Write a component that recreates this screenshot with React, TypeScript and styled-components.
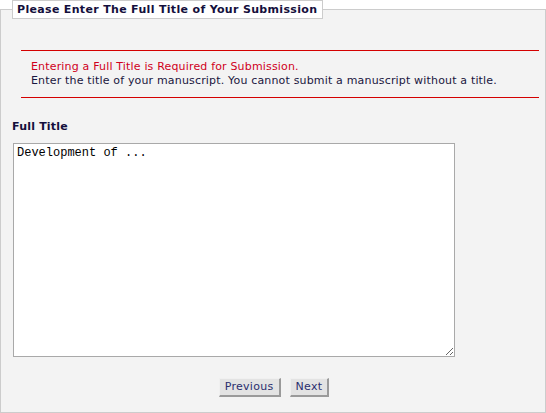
import styled, { createGlobalStyle } from 'styled-components';

const GlobalStyle = createGlobalStyle`
  html, body {
    margin: 0;
    padding: 0;
    background: #ffffff;
  }
  body {
    font-family: "DejaVu Sans", Verdana, sans-serif;
    font-size: 11px;
  }
`;

const Panel = styled.fieldset`
  box-sizing: border-box;
  width: 546px;
  height: 413px;
  margin: 0;
  padding: 0;
  border: 1px solid #cccccc;
  background: #f3f3f3;
  display: flex;
  flex-direction: column;
`;

const Legend = styled.legend`
  margin-left: 11px;
  padding: 2px 5px 2px 4px;
  background: #ffffff;
  border: 1px solid #cccccc;
  font-family: "DejaVu Sans", Verdana, sans-serif;
  font-size: 11px;
  font-weight: bold;
  letter-spacing: 0.33px;
  line-height: 13px;
  color: #140f3c;
`;

const Notice = styled.div`
  margin: 31px 6px 0 20px;
  padding: 9px 0 9px 10px;
  border-top: 1px solid #d40000;
  border-bottom: 1px solid #d40000;
  line-height: 14px;
  font-size: 11px;
  letter-spacing: 0.17px;
`;

const NoticeLine = styled.div<{ $alert?: boolean }>`
  color: ${(p) => (p.$alert ? '#d0001c' : '#1a1640')};
  white-space: nowrap;
`;

const Label = styled.div`
  margin: 22px 0 0 11px;
  font-weight: bold;
  font-size: 11px;
  letter-spacing: 0.2px;
  line-height: 14px;
  color: #140f3c;
`;

const TitleBox = styled.textarea`
  box-sizing: border-box;
  width: 442px;
  height: 214px;
  margin: 9px 0 0 12px;
  padding: 2px 3px;
  border: 1px solid #a9a9a9;
  background: #ffffff;
  font-family: "Liberation Mono", "DejaVu Sans Mono", monospace;
  font-size: 12px;
  line-height: 14px;
  color: #000000;
  resize: both;
  outline: none;
`;

const Actions = styled.div`
  display: flex;
  justify-content: center;
  gap: 9px;
  margin-top: 21px;
  padding-left: 2px;
`;

const NavButton = styled.button`
  box-sizing: border-box;
  height: 19px;
  margin: 0;
  padding: 0 5px 1px 5px;
  background: #e3e3e3;
  border-style: solid;
  border-width: 1px 2px 2px 1px;
  border-color: #f0f0f0 #9a9a9a #9a9a9a #f0f0f0;
  font-family: "DejaVu Sans", Verdana, sans-serif;
  font-size: 11px;
  letter-spacing: 0.3px;
  line-height: 14px;
  color: #2a2e6e;
  cursor: pointer;
`;

export default function App() {
  return (
    <>
      <GlobalStyle />
      <Panel>
        <Legend>Please Enter The Full Title of Your Submission</Legend>
        <Notice>
          <NoticeLine $alert>Entering a Full Title is Required for Submission.</NoticeLine>
          <NoticeLine>Enter the title of your manuscript. You cannot submit a manuscript without a title.</NoticeLine>
        </Notice>
        <Label>Full Title</Label>
        <TitleBox defaultValue="Development of ..." />
        <Actions>
          <NavButton type="button">Previous</NavButton>
          <NavButton type="button">Next</NavButton>
        </Actions>
      </Panel>
    </>
  );
}
